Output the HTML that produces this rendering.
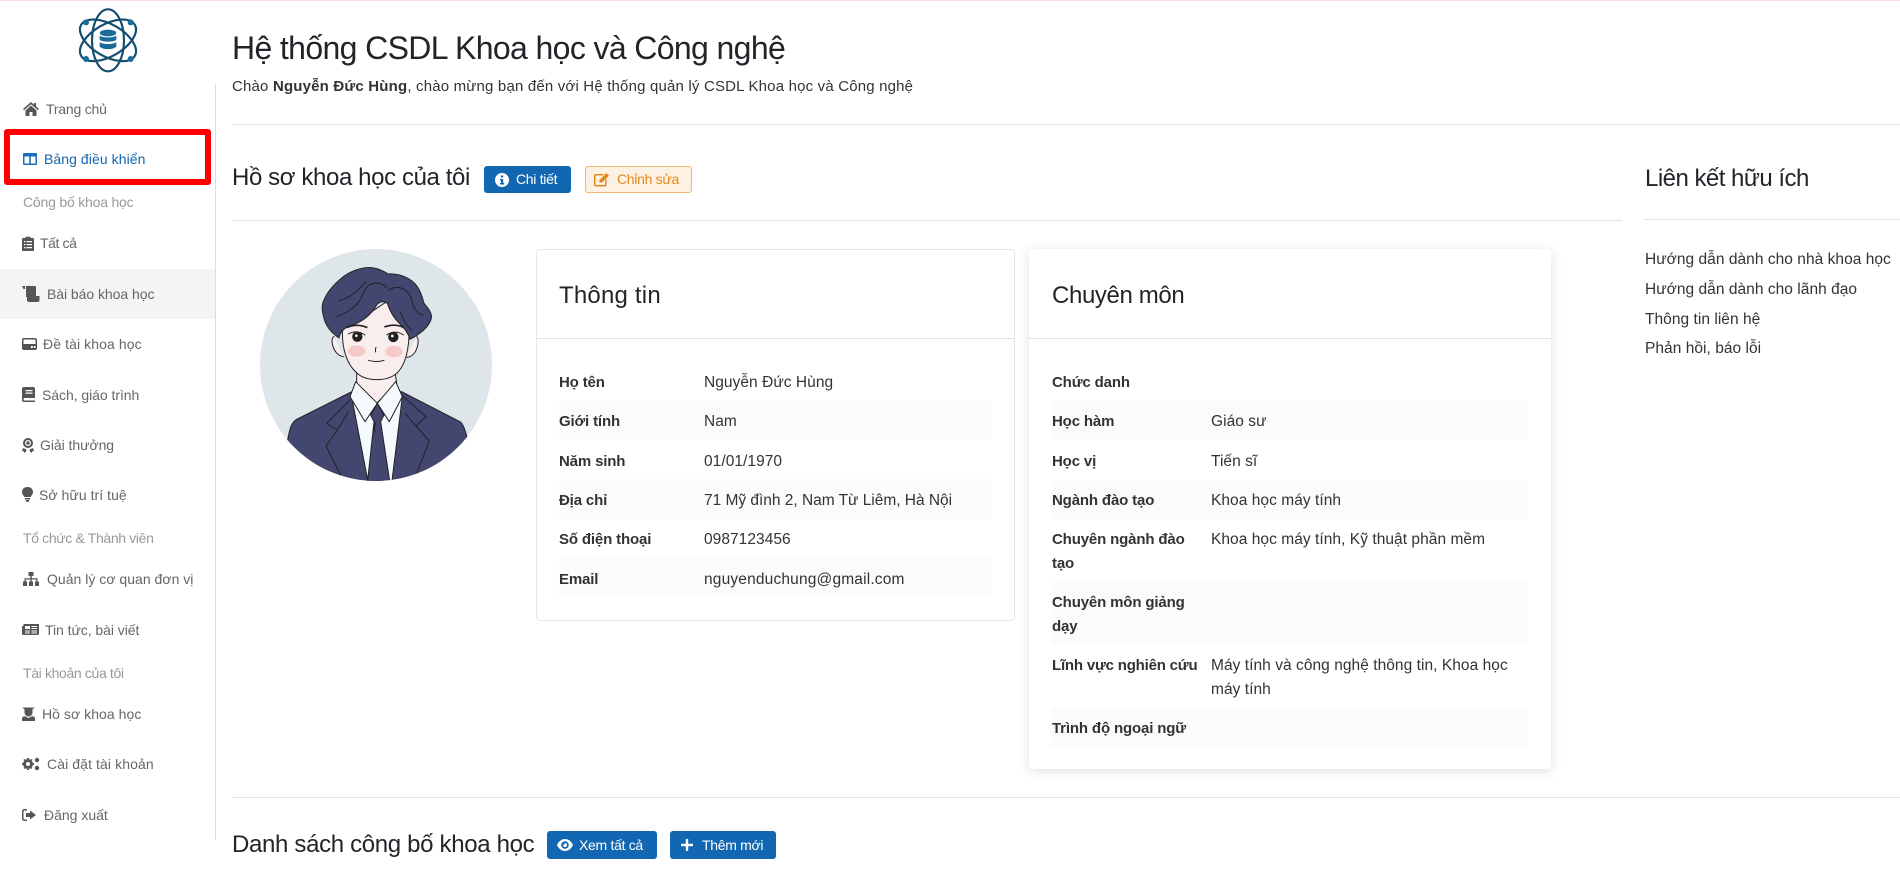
<!DOCTYPE html>
<html lang="vi"><head><meta charset="utf-8"><title>Hệ thống CSDL Khoa học và Công nghệ</title>
<style>
*{box-sizing:border-box}
html,body{margin:0;padding:0;width:1900px;height:881px;overflow:hidden;background:#fff}
body{position:relative;font-family:"Liberation Sans",Arial,sans-serif;color:#333}
.t{position:absolute;white-space:nowrap;line-height:24px;height:24px}
.a{position:absolute}
.s{font-size:14px;color:#666;letter-spacing:-.05px}
.g{font-size:14px;color:#999;letter-spacing:-.35px}
.i{position:absolute;fill:#555}
.l,.l2{font-size:15px;font-weight:bold;color:#333;letter-spacing:-.15px;margin-top:1px}
.l{left:559px}.l2{left:1052px}
.v,.v2{font-size:15.500px;color:#333;letter-spacing:.05px;margin-top:1px}
.v{left:704px}.v2{left:1211px}
.st{position:absolute;background:#fbfbfb}
.hr{position:absolute;height:1px;background:#e0e0e8}
.h{color:#212529;font-weight:400;margin-top:1px}
.k{font-size:15.500px;letter-spacing:.04px;margin-top:1px}
.btn{position:absolute;height:27px;background:#1167b1;border-radius:3px;color:#fff;font-size:14px;line-height:27px;white-space:nowrap;letter-spacing:-.3px}
</style></head><body>
<div class="a" style="left:0;top:0;width:1900px;height:1px;background:#f8dfe3"></div>

<!-- Logo -->
<svg class="a" style="left:60px;top:0" width="100" height="80" viewBox="0 0 300 240">
<g fill="none" stroke="#134e6f" stroke-width="6.500">
<ellipse cx="144" cy="121" rx="48" ry="93"/>
<ellipse cx="144" cy="121" rx="48" ry="93" transform="rotate(60 144 121)"/>
<ellipse cx="144" cy="121" rx="48" ry="93" transform="rotate(-60 144 121)"/>
</g>
<g fill="#1a6a9a">
<circle cx="78" cy="67" r="9"/><circle cx="212" cy="67" r="9"/><circle cx="78" cy="177" r="9"/><circle cx="212" cy="177" r="9"/>
</g>
<circle cx="144" cy="120" r="36" fill="#fff"/>
<g fill="#1a6a9a">
<ellipse cx="144" cy="99" rx="25" ry="10"/>
<path d="M119 106c6 8 44 8 50 0v13c-6 8-44 8-50 0z"/>
<path d="M119 126c6 8 44 8 50 0v13c-6 11-44 11-50 0z"/>
</g>
</svg>

<!-- Sidebar -->
<div class="a" style="left:215px;top:84px;width:1px;height:756px;background:#ddd"></div>
<div class="a" style="left:0;top:269px;width:215px;height:50px;background:#f4f4f4"></div>
<div class="a" style="left:4px;top:129px;width:207px;height:56px;border:6px solid #f00;border-radius:3px"></div>

<svg class="i" style="left:23px;top:102px" width="16" height="14" viewBox="0 0 16 14"><path d="M8 0 0 7l1 1.200 7-6 7 6 1-1.200-3-2.600V1h-2v1.800zM2.500 8.500V14H6.500V10h3v4h4V8.500L8 3.500z"/></svg>
<div class="t s" style="left:46px;top:97px;letter-spacing:-.2px">Trang chủ</div>
<svg class="i" style="left:23px;top:153px;fill:#1a70b8" width="14" height="12" viewBox="0 0 14 12"><path d="M0 1q0-1 1-1h12q1 0 1 1v10q0 1-1 1H1q-1 0-1-1zm1.500 2.500V10.500h4.700V3.500zm6.300 0V10.500h4.700V3.500z"/></svg>
<div class="t s" style="left:44px;top:147px;color:#1167b1;letter-spacing:.07px">Bảng điều khiển</div>
<div class="t g" style="left:23px;top:190px;letter-spacing:-.2px">Công bố khoa học</div>
<svg class="i" style="left:22px;top:236px" width="12" height="15" viewBox="0 0 12 15"><path d="M1 2h2.500V.800h5V2H11q1 0 1 1v11q0 1-1 1H1q-1 0-1-1V3q0-1 1-1zM2 5v1.300h1.500V5zm2.500 0v1.300H10V5zM2 8v1.300h1.500V8zm2.500 0v1.300H10V8zM2 11v1.300h1.500V11zm2.500 0v1.300H10V11z"/></svg>
<div class="t s" style="left:40px;top:231px;letter-spacing:-.4px">Tất cả</div>
<svg class="i" style="left:22px;top:286px" width="18" height="16" viewBox="0 0 18 16"><path d="M0 0h3v3H1.500zM4 0h9q1 0 1 1v9h3.500v4q0 2-2 2H7q-2 0-2-2v-3H4z"/></svg>
<div class="t s" style="left:47px;top:282px">Bài báo khoa học</div>
<svg class="i" style="left:22px;top:338px" width="15" height="12" viewBox="0 0 15 12"><path d="M2 0h11q2 0 2 2v8q0 2-2 2H2q-2 0-2-2V2q0-2 2-2zm0 1.500Q1.500 1.500 1.500 2V6h12V2q0-.5-.5-.5zM9 8v2h1.800V8zm2.800 0v2h1.700V8z"/></svg>
<div class="t s" style="left:43px;top:332px;letter-spacing:.1px">Đề tài khoa học</div>
<svg class="i" style="left:22px;top:387px" width="13" height="15" viewBox="0 0 13 15"><path d="M2 0h9q2 0 2 2v9H2.500q-1 0-1 1.200t1 1.300H13V15H2q-2 0-2-2V2q0-2 2-2zm1.500 3v1.300h7V3zm0 2.500v1.300h7V5.500z"/></svg>
<div class="t s" style="left:42px;top:383px">Sách, giáo trình</div>
<svg class="i" style="left:22px;top:438px" width="12" height="15" viewBox="0 0 12 15"><path d="M6 0a5 5 0 0 1 5 5 5 5 0 0 1-5 5 5 5 0 0 1-5-5 5 5 0 0 1 5-5zm0 2a3 3 0 0 0 0 6 3 3 0 0 0 0-6zM1 10 4 11.200 4.500 13 2.500 15l-.7-1.700H0zm10 0-3 1.200L7.500 13l2 2 .7-1.700H12zM6 3.300a1.700 1.700 0 1 1 0 3.400 1.700 1.700 0 0 1 0-3.400z"/></svg>
<div class="t s" style="left:40px;top:433px">Giải thưởng</div>
<svg class="i" style="left:22px;top:487px" width="11" height="15" viewBox="0 0 11 15"><path d="M5.500 0C9 0 11 2.300 11 5c0 2-1.500 3.500-2.300 5H2.300C1.500 8.500 0 7 0 5 0 2.300 2 0 5.500 0zM2.800 11h5.400v1.500H2.800zM3.500 13h4l-1 2h-2z"/></svg>
<div class="t s" style="left:39px;top:483px;letter-spacing:.05px">Sở hữu trí tuệ</div>
<div class="t g" style="left:23px;top:526px">Tổ chức &amp; Thành viên</div>
<svg class="i" style="left:22px;top:572px" width="18" height="14" viewBox="0 0 18 14"><path d="M6.500 0h5v4h-1.700v2.200H15.500V9.500h1.500V14h-4V9.500h1.200V7.500H9.700v2h1.300V14H7V9.500h1.300v-2H3.800v2H5V14H1V9.500h1.500V6.200H8.300V4H6.500z"/></svg>
<div class="t s" style="left:47px;top:567px;letter-spacing:.02px">Quản lý cơ quan đơn vị</div>
<svg class="i" style="left:22px;top:624px" width="17" height="11" viewBox="0 0 17 11"><path d="M1.500 0H17v9.500q0 1.500-1.500 1.500h-14Q0 11 0 9.500V2h1.500zM3 2v3h5V2zM9.500 2v1H15V2zM9.500 4v1H15V4zM3 6.500v1h5v-1zM9.500 6.500v1H15v-1zM3 8.500v1h5v-1zM9.500 8.500v1H15v-1z"/></svg>
<div class="t s" style="left:45px;top:618px">Tin tức, bài viết</div>
<div class="t g" style="left:23px;top:661px">Tài khoản của tôi</div>
<svg class="i" style="left:22px;top:707px" width="13" height="14" viewBox="0 0 13 14"><path d="M0 .5 13 .5 10.500 2.200V5.500A4 4 0 0 1 2.500 5.500V2.200zM0 14V11.500Q0 9.200 3 9.200L6.500 11 10 9.200q3 0 3 2.300V14z"/></svg>
<div class="t s" style="left:42px;top:702px;letter-spacing:.05px">Hồ sơ khoa học</div>
<svg class="i" style="left:22px;top:757px" width="18" height="14" viewBox="0 0 18 14"><path d="M6 2a5 5 0 1 1 0 10A5 5 0 0 1 6 2zm0 3a2 2 0 1 0 0 4 2 2 0 0 0 0-4zM5 1h2v2H5zM5 11h2v2H5zM1 6v2H0V6zM12 6v2h-1V6zM1.500 2.500 3 2 4 3.500 2.500 4.500zM8 10.500 9.500 9.500 10.500 11 9 12zM9 2 10.500 2.500 9.500 4.500 8 3.500zM3 12 1.500 11 2.500 9.500 4 10.500z"/><circle cx="15" cy="3" r="2.200"/><circle cx="15" cy="11" r="2.200"/></svg>
<div class="t s" style="left:47px;top:752px;letter-spacing:.1px">Cài đặt tài khoản</div>
<svg class="i" style="left:22px;top:809px" width="14" height="12" viewBox="0 0 14 12"><path d="M5 0v1.500H2.500Q1.500 1.500 1.500 2.500v7q0 1 1 1H5V12H2.500Q0 12 0 9.500v-7Q0 0 2.500 0zM8 1.500 14 6 8 10.500V8H4V4h4z"/></svg>
<div class="t s" style="left:44px;top:803px;letter-spacing:0">Đăng xuất</div>

<!-- Header -->
<div class="t" style="left:232px;top:28px;font-size:32px;line-height:40px;height:40px;color:#212529;letter-spacing:-.63px">Hệ thống CSDL Khoa học và Công nghệ</div>
<div class="t" style="left:232px;top:75px;font-size:15px;color:#333;letter-spacing:.18px">Chào <b>Nguyễn Đức Hùng</b>, chào mừng bạn đến với Hệ thống quản lý CSDL Khoa học và Công nghệ</div>
<div class="hr" style="left:232px;top:124px;width:1668px"></div>

<div class="t h" style="left:232px;top:161px;font-size:24px;line-height:32px;height:32px;letter-spacing:-.39px">Hồ sơ khoa học của tôi</div>
<div class="btn" style="left:484px;top:166px;width:87px;padding-left:32px">Chi tiết<svg class="a" style="left:11px;top:7px" width="14" height="14" viewBox="0 0 14 14"><circle cx="7" cy="7" r="7" fill="#fff"/><path d="M5.800 2.500h2.400v2H5.800zM5 6h3.200v4h1v1.500H5V10h1V7.500H5z" fill="#1167b1"/></svg></div>
<div class="btn" style="left:585px;top:166px;width:107px;padding-left:31px;line-height:25px;background:#fdf1e3;border:1px solid #f0b76f;color:#e08a1e">Chỉnh sửa<svg class="a" style="left:8px;top:5px" width="16" height="15" viewBox="0 0 16 15"><path d="M2 2h8L8.500 3.500H2Q1.500 3.500 1.500 4v8.500q0 .5.500.5h8.500q.5 0 .5-.5V8l1.500-1.500v6q0 2-2 2H2q-2 0-2-2V4q0-2 2-2zM12.500 1 15 3.500 8 10.500H5.500V8z" fill="#e08a1e"/></svg></div>
<div class="hr" style="left:232px;top:220px;width:1390px"></div>

<div class="t h" style="left:1645px;top:162px;font-size:24px;line-height:32px;height:32px;letter-spacing:-.52px">Liên kết hữu ích</div>
<div class="hr" style="left:1644px;top:219px;width:256px"></div>
<div class="t k" style="left:1645px;top:247px">Hướng dẫn dành cho nhà khoa học</div>
<div class="t k" style="left:1645px;top:277px">Hướng dẫn dành cho lãnh đạo</div>
<div class="t k" style="left:1645px;top:307px">Thông tin liên hệ</div>
<div class="t k" style="left:1645px;top:336px">Phản hồi, báo lỗi</div>

<!-- Avatar -->
<svg class="a" style="left:240px;top:240px" width="300" height="260" viewBox="0 0 900 780">
<defs><clipPath id="c"><circle cx="408" cy="375" r="348"/></clipPath></defs>
<circle cx="408" cy="375" r="348" fill="#dfe6e9"/>
<g clip-path="url(#c)" stroke="#222" stroke-width="3" stroke-linejoin="round" stroke-linecap="round">
<path d="M143 600C150 560 155 548 170 538L335 455H485L660 545C670 552 675 570 682 595L690 760H130Z" fill="#43466f"/>
<path d="M335 470 385 730H455L487 470Z" fill="#f4fafd"/>
<path d="M350 395V440L410 490 470 430 465 395Z" fill="#faeded"/>
<path d="M347 425 330 470 375 545 412 490 448 545 487 470 467 425 412 490Z" fill="#f4fafd"/>
<path d="M392 525 412 490 432 525 422 545 450 730H382L402 545Z" fill="#43466f"/>
<path d="M407 548Q402 560 405 575" fill="none"/>
<path d="M330 480 260 550 292 570 258 618 302 705M325 515 292 570M490 470 558 530 528 558 568 603 530 700M495 520 528 558" fill="none"/>
<path d="M282 290C270 292 276 345 310 350M530 290C540 295 534 350 500 352" fill="#faeded"/>
<path d="M308 260C304 320 318 372 352 400C378 424 440 426 470 400C498 375 508 320 508 260L440 185 395 215Z" fill="#faeded"/>
<path d="M297 294C280 282 260 265 252 235C246 215 244 195 252 180C262 155 285 130 310 110C340 88 385 76 410 86C425 90 435 96 445 102C480 100 515 115 532 140C545 160 548 175 552 190C565 205 577 220 574 235C567 262 540 282 510 298C505 282 495 265 478 250C462 235 450 215 442 190C430 182 418 185 410 195C395 222 370 245 330 258C315 262 300 275 297 294Z" fill="#43466f"/>
<path d="M288 230C320 220 355 200 370 160C378 130 415 118 440 142M445 150C480 130 510 150 518 190C522 210 535 222 550 225M298 182C330 175 355 150 378 125M480 215C490 240 505 265 515 270" fill="none"/>
<path d="M322 262Q350 250 380 262M435 260Q465 250 490 262" fill="none" stroke-width="5"/>
<path d="M325 282Q350 268 375 285M440 285Q465 268 490 285" fill="none"/>
<ellipse cx="350" cy="333" rx="26" ry="17" fill="#f6c9c9" stroke="none"/>
<ellipse cx="462" cy="335" rx="26" ry="17" fill="#f6c9c9" stroke="none"/>
<circle cx="352" cy="290" r="14" fill="#222"/><circle cx="460" cy="291" r="14" fill="#222"/>
<circle cx="349" cy="287" r="4" fill="#fff" stroke="none"/><circle cx="457" cy="288" r="4" fill="#fff" stroke="none"/>
<path d="M408 322Q405 330 407 336M385 361Q408 368 432 361" fill="none"/>
</g>
</svg>

<!-- Card 1 -->
<div class="a" style="left:536px;top:249px;width:479px;height:372px;border:1px solid #e6e6ee;border-radius:4px;background:#fff"></div>
<div class="hr" style="left:537px;top:338px;width:477px"></div>
<div class="t h" style="left:559px;top:280px;font-size:24px;line-height:30px;height:30px;letter-spacing:.2px">Thông tin</div>
<div class="st" style="left:559px;top:400px;width:433px;height:40px"></div>
<div class="st" style="left:559px;top:479px;width:433px;height:40px"></div>
<div class="st" style="left:559px;top:558px;width:433px;height:39px"></div>
<div class="t l" style="top:370px">Họ tên</div><div class="t v" style="top:370px">Nguyễn Đức Hùng</div>
<div class="t l" style="top:409px">Giới tính</div><div class="t v" style="top:409px">Nam</div>
<div class="t l" style="top:449px">Năm sinh</div><div class="t v" style="top:449px">01/01/1970</div>
<div class="t l" style="top:488px">Địa chỉ</div><div class="t v" style="top:488px;letter-spacing:-.02px">71 Mỹ đình 2, Nam Từ Liêm, Hà Nội</div>
<div class="t l" style="top:527px">Số điện thoại</div><div class="t v" style="top:527px">0987123456</div>
<div class="t l" style="top:567px">Email</div><div class="t v" style="top:567px;letter-spacing:.17px">nguyenduchung@gmail.com</div>

<!-- Card 2 -->
<div class="a" style="left:1029px;top:249px;width:522px;height:520px;border-radius:4px;background:#fff;box-shadow:0 2px 12px rgba(0,0,0,.13)"></div>
<div class="hr" style="left:1029px;top:338px;width:522px"></div>
<div class="t h" style="left:1052px;top:280px;font-size:24px;line-height:30px;height:30px;letter-spacing:-.37px">Chuyên môn</div>
<div class="st" style="left:1051px;top:401px;width:477px;height:39px"></div>
<div class="st" style="left:1051px;top:480px;width:477px;height:39px"></div>
<div class="st" style="left:1051px;top:582px;width:477px;height:62px"></div>
<div class="st" style="left:1051px;top:708px;width:477px;height:39px"></div>
<div class="t l2" style="top:370px">Chức danh</div>
<div class="t l2" style="top:409px">Học hàm</div><div class="t v2" style="top:409px">Giáo sư</div>
<div class="t l2" style="top:449px">Học vị</div><div class="t v2" style="top:449px">Tiến sĩ</div>
<div class="t l2" style="top:488px">Ngành đào tạo</div><div class="t v2" style="top:488px">Khoa học máy tính</div>
<div class="t l2" style="top:527px">Chuyên ngành đào</div><div class="t l2" style="top:551px">tạo</div><div class="t v2" style="top:527px">Khoa học máy tính, Kỹ thuật phần mềm</div>
<div class="t l2" style="top:590px">Chuyên môn giảng</div><div class="t l2" style="top:614px">dạy</div>
<div class="t l2" style="top:653px;letter-spacing:-.2px">Lĩnh vực nghiên cứu</div><div class="t v2" style="top:653px">Máy tính và công nghệ thông tin, Khoa học</div><div class="t v2" style="top:677px">máy tính</div>
<div class="t l2" style="top:716px">Trình độ ngoại ngữ</div>

<!-- Bottom -->
<div class="hr" style="left:232px;top:797px;width:1668px"></div>
<div class="t h" style="left:232px;top:828px;font-size:24px;line-height:32px;height:32px;letter-spacing:-.33px">Danh sách công bố khoa học</div>
<div class="btn" style="left:547px;top:831px;width:110px;padding-left:32px;height:28px;line-height:28px">Xem tất cả<svg class="a" style="left:10px;top:8px" width="16" height="12" viewBox="0 0 16 12"><path d="M8 0c3.500 0 6.500 2.500 8 6-1.500 3.500-4.500 6-8 6S1.500 9.500 0 6C1.500 2.500 4.500 0 8 0zm0 2.200A3.800 3.800 0 1 0 8 9.800 3.800 3.800 0 0 0 8 2.200zM8 4a2 2 0 1 1-2 2c.5 0 1.800-.5 2-2z" fill="#fff"/></svg></div>
<div class="btn" style="left:670px;top:831px;width:106px;padding-left:32px;height:28px;line-height:28px">Thêm mới<svg class="a" style="left:11px;top:8px" width="12" height="12" viewBox="0 0 12 12"><path d="M4.800 0h2.400v4.800H12v2.400H7.200V12H4.800V7.200H0V4.800h4.800z" fill="#fff"/></svg></div>
</body></html>
